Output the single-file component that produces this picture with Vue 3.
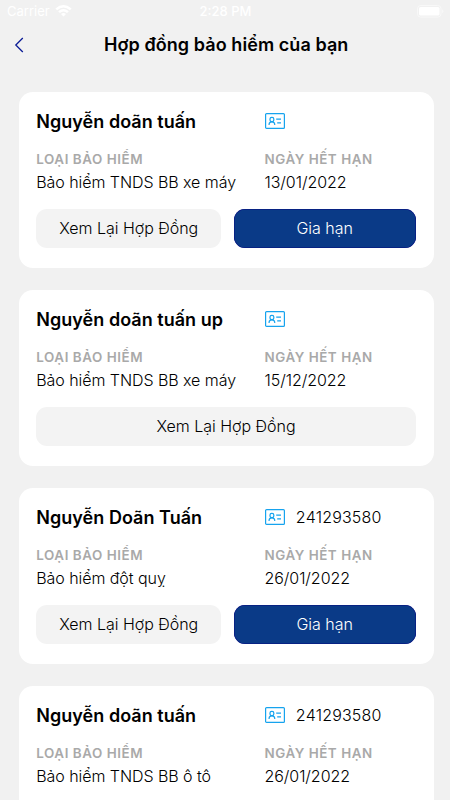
<script setup>
const contracts = [
  { id: 1, name: 'Nguyễn doãn tuấn', idNumber: '', type: 'Bảo hiểm TNDS BB xe máy', expiry: '13/01/2022', renewable: true },
  { id: 2, name: 'Nguyễn doãn tuấn up', idNumber: '', type: 'Bảo hiểm TNDS BB xe máy', expiry: '15/12/2022', renewable: false },
  { id: 3, name: 'Nguyễn Doãn Tuấn', idNumber: '241293580', type: 'Bảo hiểm đột quỵ', expiry: '26/01/2022', renewable: true },
  { id: 4, name: 'Nguyễn doãn tuấn', idNumber: '241293580', type: 'Bảo hiểm TNDS BB ô tô', expiry: '26/01/2022', renewable: true },
]
</script>

<template>
  <div class="screen">
    <div class="status">
      <div class="carrier">
        <span>Carrier</span>
        <svg class="wifi" viewBox="0 0 17 12" width="17" height="12">
          <path d="M0.4 3.5Q8.5-3.3 16.6 3.5L14.9 5.2Q8.5-.2 2.1 5.2ZM3.2 6.3Q8.5 1.9 13.8 6.3L12.1 8Q8.5 5 4.9 8ZM6 9.1Q8.5 7.1 11 9.1L8.5 11.6Z" fill="#fff" />
        </svg>
      </div>
      <span class="clock">2:28 PM</span>
      <svg class="battery" viewBox="0 0 27 13" width="27" height="13">
        <rect x="0.5" y="0.5" width="23.5" height="11.6" rx="3.2" fill="none" stroke="#fff" stroke-opacity=".5" />
        <rect x="2" y="2" width="20.5" height="8.6" rx="1.6" fill="#fff" />
        <path d="M25.3 4.2Q27.5 6.3 25.3 8.4Z" fill="#fff" fill-opacity=".6" />
      </svg>
    </div>
    <header class="header">
      <svg class="back" viewBox="0 0 10 16" width="10" height="16">
        <path d="M8.8 1L1.8 8L8.8 15" fill="none" stroke="#0b1c96" stroke-width="1.3" />
      </svg>
      <h1>Hợp đồng bảo hiểm của bạn</h1>
    </header>
    <main class="list">
      <article v-for="c in contracts" :key="c.id" class="card">
        <div class="grid">
          <h2>{{ c.name }}</h2>
          <div class="identity">
            <svg viewBox="0 0 20 16" width="20" height="16" fill="none" stroke="#16a3ee" stroke-width="1.2">
              <rect x="0.6" y="0.6" width="18.8" height="14.8" rx="1" />
              <rect x="5" y="4.3" width="3.8" height="4.3" rx="1.7" />
              <path d="M4.1 12V11Q4.3 8.9 6.9 8.9Q9.4 8.9 9.7 11V12M11.2 6.2H16M12.2 9.8H16" />
            </svg>
            <span>{{ c.idNumber }}</span>
          </div>
          <span class="label">LOẠI BẢO HIỂM</span>
          <span class="label">NGÀY HẾT HẠN</span>
          <span class="value">{{ c.type }}</span>
          <span class="value">{{ c.expiry }}</span>
        </div>
        <div class="actions">
          <button class="view">Xem Lại Hợp Đồng</button>
          <button v-if="c.renewable" class="renew">Gia hạn</button>
        </div>
      </article>
    </main>
  </div>
</template>

<style>
body {
  background: #f1f1f1;
}
</style>

<style scoped>
.screen {
  height: 800px;
  overflow: hidden;
  background: #f1f1f1;
  color: #000;
  font-family: Inter, "Liberation Sans", sans-serif;
  white-space: nowrap;
}
.status {
  display: grid;
  grid-template-columns: 1fr auto 1fr;
  align-items: center;
  height: 22px;
  padding: 0 6px 0 7px;
  color: #fff;
  font-size: 13px;
}
.carrier {
  display: flex;
  align-items: center;
  gap: 5px;
}
.clock {
  font-weight: 500;
}
.battery {
  justify-self: end;
}
.header {
  display: grid;
  grid-template-columns: 50px 1fr 47.5px;
  align-items: center;
  height: 46px;
}
.back {
  margin-left: 14px;
}
h1 {
  margin: 0;
  text-align: center;
  font-size: 18px;
  line-height: 24px;
  font-weight: 620;
  letter-spacing: .07px;
}
.list {
  display: flex;
  flex-direction: column;
  gap: 21.8px;
  padding: 24.4px 16.3px 0 18.7px;
}
.card {
  flex: none;
  box-sizing: border-box;
  height: 176px;
  padding: 17px 18px 0 17.6px;
  border-radius: 14px;
  background: #fff;
}
.grid {
  display: grid;
  grid-template-columns: 228.2px 1fr;
  grid-template-rows: 24px 37px 24px;
}
h2 {
  margin: 0;
  font-size: 18px;
  line-height: 26px;
  font-weight: 620;
  letter-spacing: .03px;
}
.identity {
  display: flex;
  align-items: center;
  gap: 11px;
  padding-left: .4px;
  font-size: 16px;
  font-weight: 350;
  letter-spacing: .2px;
}
.label {
  align-self: end;
  color: #a9a9a9;
  font-size: 13.4px;
  font-weight: 600;
  line-height: 22px;
  letter-spacing: .55px;
}
.value {
  font-size: 16px;
  font-weight: 350;
  line-height: 24px;
  letter-spacing: -.06px;
}
.actions {
  display: flex;
  gap: 12.5px;
  margin-top: 14.7px;
}
button {
  flex: 1;
  height: 39px;
  padding: 0;
  border: 0;
  border-radius: 11px;
  font: 350 16px/39px Inter, "Liberation Sans", sans-serif;
  letter-spacing: -.02px;
}
.view {
  flex: 1.015;
  background: #f3f3f3;
  color: #000;
}
.renew {
  background: #0a3a87;
  color: #fff;
  box-shadow: inset 0 0 0 .5px #050b80;
}
</style>
